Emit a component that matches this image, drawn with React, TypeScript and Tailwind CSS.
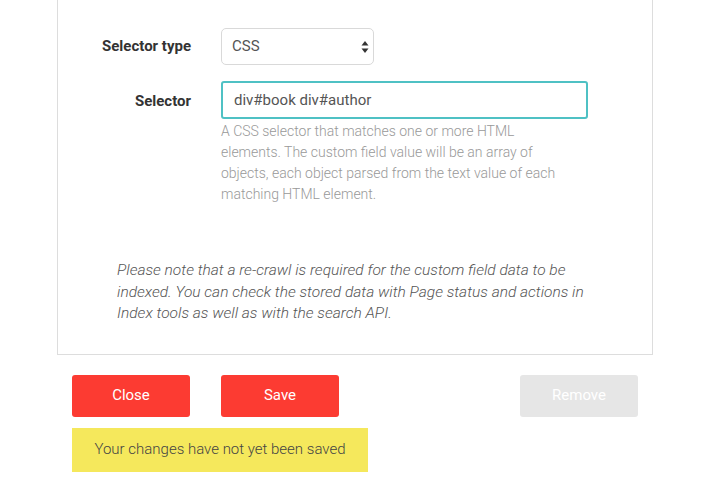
export default function App() {
  return (
    <div
      className="min-h-[499px] bg-white pl-[57px] pr-[72px] font-light text-[#333]"
      style={{ fontFamily: "Roboto, 'Liberation Sans', sans-serif" }}
    >
      <div className="border-x border-b border-[#dddddd] pt-[28px] pb-[29px]">
        <div className="flex items-center gap-[30px]">
          <label className="w-[133px] text-right text-[15px] font-bold text-[#333]">
            Selector type
          </label>
          <div className="relative flex h-[37px] w-[153px] items-center rounded-[5px] border border-[#d9d9d9] bg-white pl-[10px] text-[15px] font-normal text-[#555]">
            CSS
            <svg
              className="absolute right-[4px] top-1/2 -translate-y-1/2"
              width="8"
              height="14"
              viewBox="0 0 8 14"
            >
              <path d="M4 1 L7.5 5.5 L0.5 5.5 Z" fill="#333" />
              <path d="M4 13 L7.5 8.5 L0.5 8.5 Z" fill="#333" />
            </svg>
          </div>
        </div>

        <div className="mt-[16px] flex items-start gap-[30px]">
          <label className="mt-[9px] w-[133px] text-right text-[15px] font-bold text-[#333]">
            Selector
          </label>
          <div className="w-[367px]">
            <div className="flex h-[38px] items-center rounded-[3px] border-2 border-[#4fc1c4] bg-white pl-[11px] text-[15px] font-normal text-[#555]">
              div#book div#author
            </div>
            <p className="mt-[2px] w-[345px] text-[14px] leading-[21px] text-[#999]">
              A CSS selector that matches one or more HTML elements. The custom
              field value will be an array of objects, each object parsed from
              the text value of each matching HTML element.
            </p>
          </div>
        </div>

        <p className="mt-[55px] px-[59px] text-[15.5px] italic leading-[21.5px] text-[#555]">
          Please note that a re-crawl is required for the custom field data to
          be indexed. You can check the stored data with Page status and
          actions in Index tools as well as with the search API.
        </p>
      </div>

      <div className="mt-[20px] flex items-start px-[15px]">
        <button className="h-[42px] w-[118px] rounded-[3px] bg-[#fc3b32] text-[15px] font-normal text-white">
          Close
        </button>
        <button className="ml-[31px] h-[42px] w-[118px] rounded-[3px] bg-[#fc3b32] text-[15px] font-normal text-white">
          Save
        </button>
        <button className="ml-auto h-[42px] w-[118px] rounded-[3px] bg-[#e6e6e6] text-[15px] font-normal text-white">
          Remove
        </button>
      </div>

      <div className="ml-[15px] mt-[11px] flex h-[44px] w-[296px] items-center justify-center bg-[#f5e85c] text-[15px] font-light text-[#444]">
        Your changes have not yet been saved
      </div>
    </div>
  );
}
